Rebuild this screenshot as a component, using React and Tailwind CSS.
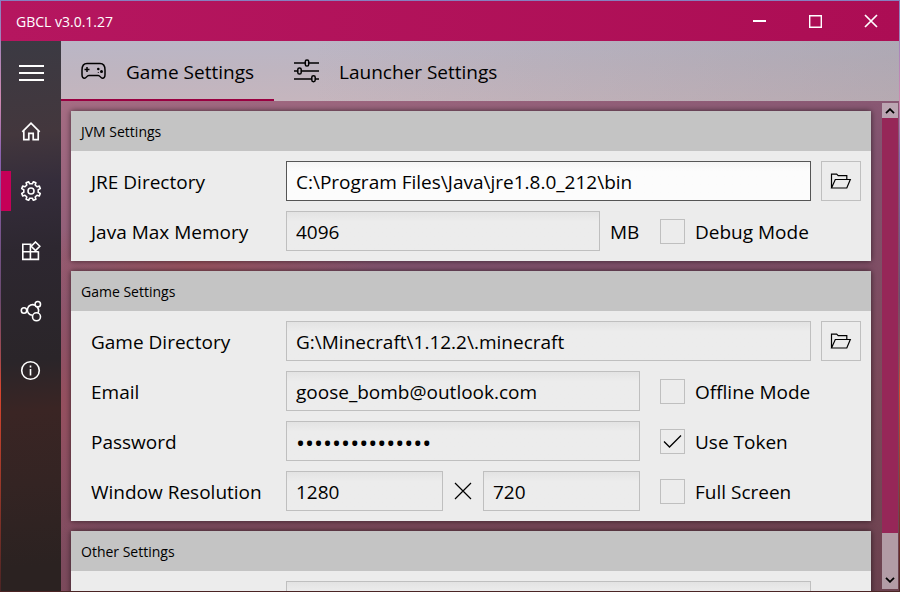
import React from "react";

const iconProps = {
  fill: "none",
  stroke: "currentColor",
  "aria-hidden": true,
};

function MenuIcon() {
  return (
    <svg {...iconProps} width="25" height="18" viewBox="0 0 25 18" strokeWidth="2">
      <path d="M0 2h25M0 9h25M0 16h25" />
    </svg>
  );
}

function HomeIcon() {
  return (
    <svg {...iconProps} width="20" height="20" viewBox="0 0 20 20" strokeWidth="1.700">
      <path d="M1.300 10.800 10 2.100l8.700 8.700M2.800 9.600v9h5v-6.200h4.400v6.200h5v-9" />
    </svg>
  );
}

function GearIcon() {
  return (
    <svg {...iconProps} width="22" height="22" viewBox="0 0 22 22" strokeWidth="1.600" strokeLinejoin="round">
      <path d="M8.600 1.700 9.700 3.800h2.600l1.100-2.100 2.500 1-.7 2.300 1.800 1.800 2.300-.7 1 2.500-2.100 1.100v2.600l2.100 1.100-1 2.500-2.300-.7-1.800 1.800.7 2.300-2.500 1-1.100-2.100H9.700l-1.100 2.100-2.500-1 .7-2.300L5 15.200l-2.300.7-1-2.500 2.100-1.100V9.700L1.700 8.600l1-2.500 2.300.7L6.800 5l-.7-2.300z" />
      <circle cx="11" cy="11" r="3" />
    </svg>
  );
}

function ModulesIcon() {
  return (
    <svg {...iconProps} width="20" height="20" viewBox="0 0 20 20" strokeWidth="1.600">
      <path d="M10.500 3.200H1.800v15.200h15.600v-8.200M1.800 10.700h15.600M9.400 3.200v15.200" />
      <path d="m14.500 1 4.300 4.300-4.300 4.300-4.300-4.300z" />
    </svg>
  );
}

function NetworkIcon() {
  return (
    <svg {...iconProps} width="22" height="22" viewBox="0 0 22 22" strokeWidth="1.600">
      <circle cx="4" cy="10.500" r="2.700" />
      <circle cx="17.800" cy="4.200" r="2.700" />
      <circle cx="16.500" cy="16.800" r="4" />
      <path d="M15.300 5.400A5.300 5.300 0 1 0 12.600 15.300M17 6.900a5.300 5.300 0 0 1 1 6" />
    </svg>
  );
}

function InfoIcon() {
  return (
    <svg {...iconProps} width="22" height="22" viewBox="0 0 22 22" strokeWidth="1.600">
      <circle cx="10.500" cy="10.500" r="8.800" />
      <path d="M10.500 9v6.500M10.500 5.500v2" />
    </svg>
  );
}

function GamepadIcon() {
  return (
    <svg {...iconProps} width="25" height="18" viewBox="0 0 25 18" strokeWidth="1.500">
      <path d="M6 1.500h13c3.600 0 5 2.700 5 6.500v4.500c0 2.300-.9 3.700-2.500 3.700-2 0-2.200-2.700-4.300-2.700H7.800c-2.100 0-2.300 2.700-4.300 2.700-1.600 0-2.500-1.400-2.500-3.700V8c0-3.800 1.400-6.500 5-6.500z" />
      <path d="M3.500 7.500h5M6 5v5" />
      <circle cx="17.300" cy="7" r="1.300" fill="currentColor" stroke="none" />
      <circle cx="20.500" cy="9.500" r="1.500" fill="currentColor" stroke="none" />
      <circle cx="17.300" cy="10.500" r=".6" fill="currentColor" stroke="none" />
    </svg>
  );
}

function SlidersIcon() {
  return (
    <svg {...iconProps} width="25" height="24" viewBox="0 0 25 24" strokeWidth="1.500">
      <path d="M0 4h11M15 4h10M0 12h3.500M7.500 12H25M0 20h17.500M21.500 20H25" />
      <rect x="11.300" y="1" width="3.400" height="6" rx="1.600" />
      <rect x="3.800" y="9" width="3.400" height="6" rx="1.600" />
      <rect x="17.800" y="16.700" width="3.400" height="6" rx="1.600" />
    </svg>
  );
}

function FolderIcon() {
  return (
    <svg {...iconProps} width="22" height="18" viewBox="0 0 22 18" strokeWidth="1.200">
      <path d="M1.500 16V2.200h5.200l1.500 1.500h8.600v3.500M1.500 16 5.300 7.500h15L16.800 16z" />
    </svg>
  );
}

function ChevronIcon({ down }) {
  return (
    <svg {...iconProps} width="10" height="6" viewBox="0 0 10 6" strokeWidth="1.800">
      <path d={down ? "M1 .8 5 4.800 9 .8" : "M1 5.200 5 1.200 9 5.200"} />
    </svg>
  );
}

function Panel({ title, children }) {
  return (
    <section className="shrink-0 bg-[#ececec] shadow-[0_0_6px_rgba(0,0,0,0.6)]">
      <h2 className="flex h-10 items-center bg-[#c4c4c4] px-2.5 pt-0.5 text-sm">{title}</h2>
      <div className="flex flex-col gap-2.5 py-2.5 pr-2.5 pl-5">{children}</div>
    </section>
  );
}

function Row({ label, htmlFor, children }) {
  return (
    <div className="flex h-10 items-center">
      <label htmlFor={htmlFor} className="w-[195px] shrink-0 pt-0.5">
        {label}
      </label>
      {children}
    </div>
  );
}

function Field({ active, type = "text", ...props }) {
  return (
    <input
      type={type}
      className={
        "h-10 min-w-0 flex-1 border px-[9px] pt-0.5 outline-none " +
        (type === "password" ? "text-2xl " : "") +
        (active
          ? "border-[#555555] bg-linear-to-b from-[#f4f4f4] to-[#fcfcfc] to-25%"
          : "border-[#bfbfbf] bg-linear-to-b from-[#e3e3e3] to-[#ececec] to-25%")
      }
      {...props}
    />
  );
}

function BrowseButton({ label }) {
  return (
    <button
      type="button"
      aria-label={label}
      className="ml-2.5 flex size-10 shrink-0 items-center justify-center border border-[#bfbfbf]"
    >
      <FolderIcon />
    </button>
  );
}

function Check({ label, checked }) {
  return (
    <label className="ml-5 flex w-[201px] shrink-0 items-center gap-2.5">
      <span className="grid size-[25px] place-items-center">
        <input
          type="checkbox"
          defaultChecked={checked}
          className="peer col-start-1 row-start-1 size-[25px] appearance-none border border-[#bfbfbf]"
        />
        <svg
          {...iconProps}
          width="19"
          height="15"
          viewBox="0 0 19 15"
          strokeWidth="1.300"
          className="pointer-events-none invisible col-start-1 row-start-1 peer-checked:visible"
        >
          <path d="m1 7.500 5.500 5.500L18 1.500" />
        </svg>
      </span>
      <span className="pt-0.5">{label}</span>
    </label>
  );
}

const navItems = [
  { name: "Home", Icon: HomeIcon },
  { name: "Settings", Icon: GearIcon, active: true },
  { name: "Modules", Icon: ModulesIcon },
  { name: "Network", Icon: NetworkIcon },
  { name: "About", Icon: InfoIcon },
];

function Sidebar() {
  return (
    <nav className="flex w-[60px] shrink-0 flex-col bg-[linear-gradient(175deg,#3b3a43_0%,#43373d_17%,#352d3b_26%,#2d2730_38%,#2a2529_58%,#3a2524_67%,#342423_80%,#2b2221_95%)] text-white">
      <button type="button" aria-label="Menu" className="flex h-16 items-center justify-center">
        <MenuIcon />
      </button>
      <div className="flex flex-col gap-5 pt-1.5">
        {navItems.map(({ name, Icon, active }) => (
          <button
            key={name}
            type="button"
            aria-label={name}
            className={
              "flex h-10 items-center justify-center border-l-10 pr-2.5 " +
              (active ? "border-[#c50057]" : "border-transparent")
            }
          >
            <Icon />
          </button>
        ))}
      </div>
    </nav>
  );
}

function TitleBar() {
  return (
    <header className="flex h-10 shrink-0 items-center bg-linear-to-r from-[#b5165f] to-[#ac0d54] text-white">
      <h1 className="flex-1 pt-0.5 pl-[15px] text-sm">GBCL v3.0.1.27</h1>
      <button type="button" aria-label="Minimize" className="flex h-10 w-14 items-center justify-center">
        <svg {...iconProps} width="13" height="13" viewBox="0 0 13 13" strokeWidth="2">
          <path d="M0 6h13" />
        </svg>
      </button>
      <button type="button" aria-label="Maximize" className="flex h-10 w-14 items-center justify-center">
        <svg {...iconProps} width="13" height="13" viewBox="0 0 13 13" strokeWidth="1.400">
          <path d="M.7.7h11.600v11.600H.7z" />
        </svg>
      </button>
      <button type="button" aria-label="Close" className="flex h-10 w-14 items-center justify-center">
        <svg {...iconProps} width="14" height="14" viewBox="0 0 14 14" strokeWidth="1.700">
          <path d="m1 1 12 12M13 1 1 13" />
        </svg>
      </button>
    </header>
  );
}

function Tabs() {
  return (
    <div
      role="tablist"
      className="flex h-[60px] shrink-0 bg-[linear-gradient(to_right,transparent_30%,rgba(140,140,150,0.3)_100%),linear-gradient(179deg,#bab6c6_0%,#bfb5c0_45%,#c8b6bd_100%)]"
    >
      <button
        type="button"
        role="tab"
        aria-selected="true"
        className="flex items-center gap-5 border-y-2 border-t-transparent border-b-[#990040] px-5"
      >
        <GamepadIcon />
        <span className="pt-0.5">Game Settings</span>
      </button>
      <button type="button" role="tab" aria-selected="false" className="flex items-center gap-5 px-5">
        <SlidersIcon />
        <span className="pt-0.5">Launcher Settings</span>
      </button>
    </div>
  );
}

function ScrollBar() {
  return (
    <div className="my-0.5 mr-px flex w-4 shrink-0 flex-col bg-[#b29ca6]">
      <button type="button" aria-label="Scroll up" className="flex h-[15px] items-center justify-center bg-[#bba5b2]">
        <ChevronIcon />
      </button>
      <div className="flex-1 bg-[#962758]" />
      <button type="button" aria-label="Scroll down" className="flex h-14 items-end justify-center pb-1.5">
        <ChevronIcon down />
      </button>
    </div>
  );
}

export default function App() {
  return (
    <div className="flex h-screen flex-col bg-[linear-gradient(180deg,#8580c0_0%,#d089b0_17%,#8a62b0_26%,#6a4a70_50%,#a04a50_60%,#d8452e_66%,#a03a2a_80%,#4a2424_100%)] p-px font-['Open_Sans',sans-serif] text-[19px] text-black">
      <TitleBar />
      <div className="flex min-h-0 flex-1">
        <Sidebar />
        <main className="flex min-w-0 flex-1 flex-col">
          <Tabs />
          <div className="flex min-h-0 flex-1 bg-[radial-gradient(180px_50px_at_16%_33%,#9c5460_0%,transparent_100%),radial-gradient(60px_160px_at_0%_62%,#96505f_0%,transparent_100%),linear-gradient(165deg,#a66d84_0%,#82536f_38%,#7c4a5b_70%,#6b424f_100%)]">
            <div className="flex min-w-0 flex-1 flex-col gap-2.5 overflow-y-auto py-2.5 pr-[11px] pl-2.5 [scrollbar-width:none]">
              <Panel title="JVM Settings">
                <Row label="JRE Directory" htmlFor="jre">
                  <Field id="jre" active defaultValue="C:\Program Files\Java\jre1.8.0_212\bin" />
                  <BrowseButton label="Browse for JRE directory" />
                </Row>
                <Row label="Java Max Memory" htmlFor="memory">
                  <Field id="memory" defaultValue="4096" />
                  <span className="ml-2.5 w-[30px] shrink-0 pt-0.5">MB</span>
                  <Check label="Debug Mode" />
                </Row>
              </Panel>
              <Panel title="Game Settings">
                <Row label="Game Directory" htmlFor="game-dir">
                  <Field id="game-dir" defaultValue="G:\Minecraft\1.12.2\.minecraft" />
                  <BrowseButton label="Browse for game directory" />
                </Row>
                <Row label="Email" htmlFor="email">
                  <Field id="email" type="email" defaultValue="goose_bomb@outlook.com" />
                  <Check label="Offline Mode" />
                </Row>
                <Row label="Password" htmlFor="password">
                  <Field id="password" type="password" defaultValue="minecraft-token" />
                  <Check label="Use Token" checked />
                </Row>
                <Row label="Window Resolution" htmlFor="res-width">
                  <Field id="res-width" defaultValue="1280" />
                  <span className="flex w-10 shrink-0 justify-center">
                    <svg {...iconProps} width="18" height="18" viewBox="0 0 18 18" strokeWidth="1.200">
                      <path d="m1 1 16 16M17 1 1 17" />
                    </svg>
                  </span>
                  <Field id="res-height" aria-label="Window height" defaultValue="720" />
                  <Check label="Full Screen" />
                </Row>
              </Panel>
              <Panel title="Other Settings">
                <Row label="" htmlFor="other">
                  <Field id="other" aria-label="Other" />
                  <span className="w-[50px] shrink-0" />
                </Row>
              </Panel>
            </div>
            <ScrollBar />
          </div>
        </main>
      </div>
    </div>
  );
}
